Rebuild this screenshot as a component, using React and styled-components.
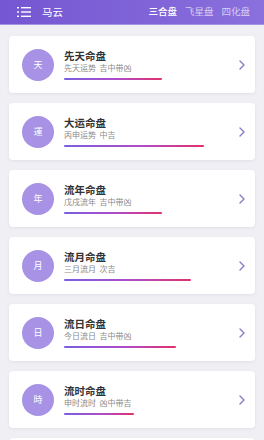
import React from "react";
import styled, { createGlobalStyle } from "styled-components";

const Global = createGlobalStyle`
  html, body { margin: 0; padding: 0; }
  body {
    background: #efeff4;
    font-family: "Noto Sans CJK SC", "Noto Sans", sans-serif;
  }
`;

const Page = styled.div`
  width: 264px;
  min-height: 440px;
  background: #efeff4;
  overflow: hidden;
`;

const Header = styled.div`
  height: 25px;
  background: linear-gradient(90deg, #7556d2 0%, #8165d8 60%, #8a70dd 100%);
  display: flex;
  align-items: center;
  padding: 0 14px 0 17px;
  box-sizing: border-box;
  border-bottom: 1px solid #a493e6;
`;

const MenuIcon = styled.svg`
  width: 14px;
  height: 10px;
  display: block;
`;

const Title = styled.div`
  color: #fff;
  font-size: 10.5px;
  margin-left: 11px;
  line-height: 1;
  flex: 1;
`;

const Tabs = styled.div`
  display: flex;
  gap: 8px;
`;

const Tab = styled.div`
  font-size: 9.5px;
  line-height: 1;
  color: ${(p) => (p.$active ? "#ffffff" : "rgba(255,255,255,0.68)")};
  font-weight: ${(p) => (p.$active ? 500 : 400)};
`;

const List = styled.div`
  display: flex;
  flex-direction: column;
  gap: 10px;
  padding: 11px 9px 0;
`;

const Card = styled.div`
  height: 57px;
  background: #fff;
  border-radius: 4px;
  box-shadow: 0 1px 3px rgba(120, 120, 150, 0.12);
  display: flex;
  align-items: center;
  padding: 0 10px 0 13px;
`;

const Circle = styled.div`
  width: 32px;
  height: 32px;
  border-radius: 50%;
  background: #a792e6;
  color: #fff;
  font-size: 9px;
  display: flex;
  align-items: center;
  justify-content: center;
  flex-shrink: 0;
`;

const Body = styled.div`
  flex: 1;
  margin-left: 10px;
  display: flex;
  flex-direction: column;
  align-items: flex-start;
`;

const CardTitle = styled.div`
  font-size: 10.5px;
  line-height: 13px;
  font-weight: 700;
  color: #333;
`;

const Sub = styled.div`
  font-size: 8px;
  line-height: 10px;
  color: #8a8a8a;
  margin-top: 1px;
  white-space: pre;
`;

const Bar = styled.div`
  height: 1.5px;
  margin-top: 5px;
  background: linear-gradient(90deg, #7a5fe0 0%, #b04cc8 55%, #e2306a 100%);
  border-radius: 1px;
`;

const Chevron = styled.svg`
  width: 6px;
  height: 10px;
  display: block;
  flex-shrink: 0;
`;

const items = [
  { c: "天", t: "先天命盘", s: "先天运势  吉中带凶", w: 98 },
  { c: "運", t: "大运命盘", s: "丙申运势  中吉", w: 140 },
  { c: "年", t: "流年命盘", s: "戊戌流年  吉中带凶", w: 98 },
  { c: "月", t: "流月命盘", s: "三月流月  次吉", w: 127 },
  { c: "日", t: "流日命盘", s: "今日流日  吉中带凶", w: 112 },
  { c: "時", t: "流时命盘", s: "申时流时  凶中带吉", w: 70 },
  { c: "", t: "", s: "", w: 0 },
];

export default function App() {
  return (
    <Page>
      <Global />
      <Header>
        <MenuIcon viewBox="0 0 14 10">
          <g fill="#fff">
            <rect x="0" y="0" width="2" height="1.4" />
            <rect x="4" y="0" width="10" height="1.4" />
            <rect x="0" y="4.3" width="2" height="1.4" />
            <rect x="4" y="4.3" width="10" height="1.4" />
            <rect x="0" y="8.6" width="2" height="1.4" />
            <rect x="4" y="8.6" width="10" height="1.4" />
          </g>
        </MenuIcon>
        <Title>马云</Title>
        <Tabs>
          <Tab $active>三合盘</Tab>
          <Tab>飞星盘</Tab>
          <Tab>四化盘</Tab>
        </Tabs>
      </Header>
      <List>
        {items.map((it, i) => (
          <Card key={i}>
            {it.c && (
              <>
                <Circle>{it.c}</Circle>
                <Body>
                  <CardTitle>{it.t}</CardTitle>
                  <Sub>{it.s}</Sub>
                  <Bar style={{ width: it.w }} />
                </Body>
                <Chevron viewBox="0 0 6 10">
                  <polyline
                    points="1,1 5,5 1,9"
                    fill="none"
                    stroke="#8b7cc9"
                    strokeWidth="1.4"
                    strokeLinecap="round"
                    strokeLinejoin="round"
                  />
                </Chevron>
              </>
            )}
          </Card>
        ))}
      </List>
    </Page>
  );
}
